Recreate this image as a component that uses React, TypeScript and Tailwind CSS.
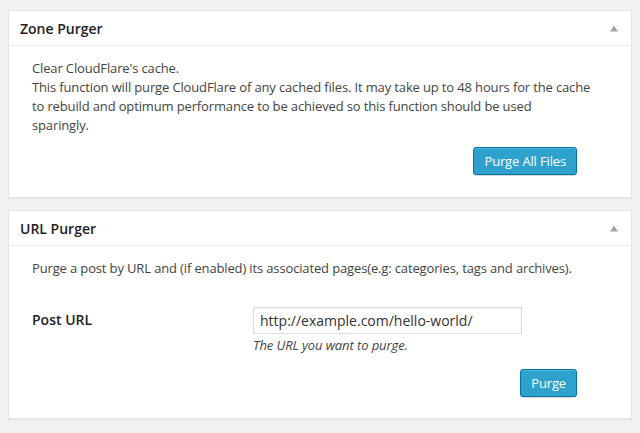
const Arrow = () => (
  <svg width="10" height="7" viewBox="0 0 10 7" className="block">
    <polygon points="5,0.5 9,6.5 1,6.5" fill="#a0a5aa" />
  </svg>
)

const PostBox = ({ title, children }: { title: string; children: React.ReactNode }) => {
  return (
    <div className="bg-white border border-[#e5e5e5] shadow-[0_1px_1px_rgba(0,0,0,0.04)]">
      <div className="flex items-center justify-between h-[35px] pl-[11px] pr-[12px] border-b border-[#eeeeee]">
        <h3 className="text-[14px] font-semibold text-[#222] leading-[19px]">{title}</h3>
        <Arrow />
      </div>
      {children}
    </div>
  )
}

const Button = ({ label }: { label: string }) => (
  <button className="h-[28px] px-[10px] rounded-[3px] bg-[#2ea2cc] border border-[#0074a2] text-white text-[13px] tracking-[-0.15px] leading-[26px] shadow-[inset_0_1px_0_rgba(120,200,230,0.5),0_1px_0_rgba(0,0,0,0.15)]">
    {label}
  </button>
)

const App = () => {
  return (
    <div
      className="min-h-[433px] bg-[#f1f1f1] pt-[10px] px-[8px] text-[#444]"
      style={{ fontFamily: '"Open Sans", "Noto Sans", sans-serif' }}
    >
      <PostBox title="Zone Purger">
        <div className="pt-[13px] pb-[22px] pl-[23px] pr-[12px]">
          <p className="text-[13px] leading-[19px] tracking-[-0.14px]">
            Clear CloudFlare's cache.
            <br />
            This function will purge CloudFlare of any cached files. It may take up to 48 hours for the cache
            <br />
            to rebuild and optimum performance to be achieved so this function should be used
            <br />
            sparingly.
          </p>
          <div className="flex justify-end pr-[42px] mt-[12px]">
            <Button label="Purge All Files" />
          </div>
        </div>
      </PostBox>

      <div className="mt-[12px]">
        <PostBox title="URL Purger">
          <div className="pt-[13px] pb-[21px] pl-[23px] pr-[12px]">
            <p className="text-[13px] leading-[19px] tracking-[-0.14px]">
              Purge a post by URL and (if enabled) its associated pages(e.g: categories, tags and archives).
            </p>
            <div className="flex mt-[29px]">
              <label className="w-[221px] text-[14px] font-semibold text-[#222] leading-[26px]">Post URL</label>
              <div>
                <input
                  type="text"
                  defaultValue="http://example.com/hello-world/"
                  className="block w-[269px] h-[27px] px-[6px] border border-[#dddddd] text-[14px] text-[#333] shadow-[inset_0_1px_2px_rgba(0,0,0,0.07)] outline-none"
                  style={{ fontFamily: '"Open Sans", sans-serif' }}
                />
                <p className="text-[13px] italic leading-[23px] tracking-[-0.1px]">The URL you want to purge.</p>
              </div>
            </div>
            <div className="flex justify-end pr-[42px] mt-[12px]">
              <Button label="Purge" />
            </div>
          </div>
        </PostBox>
      </div>
    </div>
  )
}

export default App
